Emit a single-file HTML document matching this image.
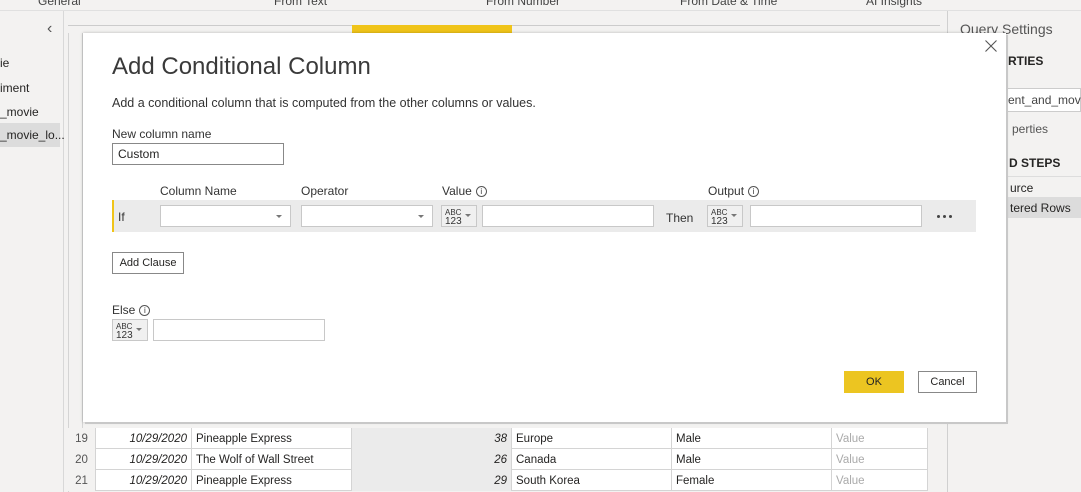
<!DOCTYPE html>
<html><head><meta charset="utf-8"><style>
*{box-sizing:border-box;margin:0;padding:0}
body{width:1081px;height:492px;overflow:hidden;background:#f3f2f1;font-family:"Liberation Sans",sans-serif;color:#252423;position:relative;font-size:12px}
.a{position:absolute}
.rib{top:-6px;font-size:12px;color:#444}
.gridrow{position:absolute;left:68px;width:860px;height:21px;border-bottom:1px solid #d4d4d4;background:#fff}
.c{position:absolute;top:0;height:21px;border-right:1px solid #d4d4d4;line-height:22px;font-size:11.5px;padding:0 4px;white-space:nowrap}
.dlg{left:83px;top:33px;width:923px;height:389px;background:#fff;box-shadow:2px 2px 0 #c8c8c8,0 0 3px rgba(0,0,0,.25)}
.inp{position:absolute;background:#fff;border:1px solid #c8c8c8;height:22px}
.dd::after{content:"";position:absolute;right:8px;top:9px;border:3px solid transparent;border-top:3px solid #777}
.t{position:absolute;font-size:12px;color:#333}
.type{position:absolute;width:36px;height:22px;border:1px solid #c8c8c8;background:#f0f0f0;font-size:8px;line-height:8px;padding:3px 0 0 3px;color:#333}
.type b{font-weight:normal;font-size:10px;line-height:9px;display:block}
.type::after{content:"";position:absolute;right:5px;top:8px;border:3px solid transparent;border-top:3px solid #777}
.info{display:inline-block;width:11px;height:11px;border:1px solid #555;border-radius:50%;font-size:8px;line-height:9px;text-align:center;vertical-align:middle;margin-left:4px}
.dot{position:absolute;width:3px;height:3px;border-radius:50%;background:#444;top:16px}
</style></head><body>
<div class="a rib" style="left:38px">General</div>
<div class="a rib" style="left:274px">From Text</div>
<div class="a rib" style="left:486px">From Number</div>
<div class="a rib" style="left:680px">From Date &amp; Time</div>
<div class="a rib" style="left:866px">AI Insights</div>
<div class="a" style="left:0;top:10px;width:1081px;height:1px;background:#e0e0e0"></div>
<div class="a" style="left:63px;top:11px;width:1px;height:481px;background:#d8d8d8"></div>
<div class="a" style="left:47px;top:20px;font-size:16px;color:#555">&#8249;</div>
<div class="a" style="left:0;top:56px;font-size:12px">ie</div>
<div class="a" style="left:0;top:81px;font-size:12px">iment</div>
<div class="a" style="left:0;top:105px;font-size:12px">_movie</div>
<div class="a" style="left:0;top:123px;width:60px;height:24px;background:#dcdcdc"></div>
<div class="a" style="left:0;top:128px;font-size:12px">_movie_lo...</div>
<!-- grid header -->
<div class="a" style="left:68px;top:25px;width:872px;height:1px;background:#ccc"></div>
<div class="a" style="left:352px;top:25px;width:160px;height:8px;background:#f0c419"></div>
<div class="a" style="left:68px;top:33px;width:15px;height:396px;background:#f3f2f1;border-right:1px solid #d4d4d4"></div>
<div class="a" style="left:68px;top:33px;width:1px;height:459px;background:#d4d4d4"></div>
<!-- rows -->
<div class="gridrow" style="top:428px"><div class="c" style="left:0;width:28px;text-align:center;color:#555;background:#f3f2f1">19</div><div class="c" style="left:28px;width:96px;text-align:right;font-style:italic">10/29/2020</div><div class="c" style="left:124px;width:160px">Pineapple Express</div><div class="c" style="left:284px;width:160px;text-align:right;font-style:italic;background:#ebebeb">38</div><div class="c" style="left:444px;width:160px">Europe</div><div class="c" style="left:604px;width:160px">Male</div><div class="c" style="left:764px;width:96px;color:#aaa">Value</div></div>
<div class="gridrow" style="top:449px"><div class="c" style="left:0;width:28px;text-align:center;color:#555;background:#f3f2f1">20</div><div class="c" style="left:28px;width:96px;text-align:right;font-style:italic">10/29/2020</div><div class="c" style="left:124px;width:160px">The Wolf of Wall Street</div><div class="c" style="left:284px;width:160px;text-align:right;font-style:italic;background:#ebebeb">26</div><div class="c" style="left:444px;width:160px">Canada</div><div class="c" style="left:604px;width:160px">Male</div><div class="c" style="left:764px;width:96px;color:#aaa">Value</div></div>
<div class="gridrow" style="top:470px"><div class="c" style="left:0;width:28px;text-align:center;color:#555;background:#f3f2f1">21</div><div class="c" style="left:28px;width:96px;text-align:right;font-style:italic">10/29/2020</div><div class="c" style="left:124px;width:160px">Pineapple Express</div><div class="c" style="left:284px;width:160px;text-align:right;font-style:italic;background:#ebebeb">29</div><div class="c" style="left:444px;width:160px">South Korea</div><div class="c" style="left:604px;width:160px">Female</div><div class="c" style="left:764px;width:96px;color:#aaa">Value</div></div>
<!-- right pane -->
<div class="a" style="left:947px;top:11px;width:1px;height:481px;background:#d0d0d0"></div>
<div class="a" style="left:960px;top:21px;font-size:14px;color:#555">Query Settings</div>
<div class="a" style="left:1008px;top:54px;font-size:12px;font-weight:bold">RTIES</div>
<div class="a" style="left:990px;top:88px;width:91px;height:24px;background:#fff;border:1px solid #ccc;font-size:12px;padding:4px 0 0 17px;color:#444">ent_and_movie</div>
<div class="a" style="left:1012px;top:122px;font-size:12px;color:#555">perties</div>
<div class="a" style="left:1009px;top:156px;font-size:12px;font-weight:bold">D STEPS</div>
<div class="a" style="left:990px;top:176px;width:91px;height:1px;background:#ddd"></div>
<div class="a" style="left:1010px;top:181px;font-size:12px">urce</div>
<div class="a" style="left:990px;top:197px;width:91px;height:21px;background:#dcdcdc"></div>
<div class="a" style="left:1010px;top:201px;font-size:12px">tered Rows</div>
<!-- dialog -->
<div class="a dlg">
 <svg class="a" style="left:902px;top:7px" width="12" height="12" viewBox="0 0 12 12"><path d="M0.5 0.5L11.5 11.5M11.5 0.5L0.5 11.5" stroke="#555" stroke-width="1.1" fill="none"/></svg>
 <div class="t" style="left:29px;top:20px;font-size:24px;font-weight:300;color:#3a3a3a">Add Conditional Column</div>
 <div class="t" style="left:29px;top:63px;font-size:12.5px">Add a conditional column that is computed from the other columns or values.</div>
 <div class="t" style="left:29px;top:94px">New column name</div>
 <div class="inp" style="left:29px;top:110px;width:172px;border-color:#888;font-size:12px;padding:3px 5px">Custom</div>
 <div class="t" style="left:77px;top:151px">Column Name</div>
 <div class="t" style="left:218px;top:151px">Operator</div>
 <div class="t" style="left:359px;top:151px">Value<span class="info">i</span></div>
 <div class="t" style="left:625px;top:151px">Output<span class="info">i</span></div>
 <div class="a" style="left:29px;top:167px;width:864px;height:32px;background:#ebebeb;border-left:2px solid #f0c419"></div>
 <div class="t" style="left:35px;top:177px">If</div>
 <div class="inp dd" style="left:77px;top:172px;width:131px"></div>
 <div class="inp dd" style="left:218px;top:172px;width:132px"></div>
 <div class="type" style="left:358px;top:172px">ABC<b>123</b></div>
 <div class="inp" style="left:399px;top:172px;width:172px"></div>
 <div class="t" style="left:583px;top:178px">Then</div>
 <div class="type" style="left:624px;top:172px">ABC<b>123</b></div>
 <div class="inp" style="left:667px;top:172px;width:172px"></div>
 <div class="dot" style="left:854px;top:182px"></div><div class="dot" style="left:860px;top:182px"></div><div class="dot" style="left:866px;top:182px"></div>
 <div class="a" style="left:29px;top:219px;width:72px;height:22px;border:1px solid #888;font-size:11px;text-align:center;line-height:20px">Add Clause</div>
 <div class="t" style="left:29px;top:270px">Else<span class="info">i</span></div>
 <div class="type" style="left:29px;top:286px">ABC<b>123</b></div>
 <div class="inp" style="left:70px;top:286px;width:172px"></div>
 <div class="a" style="left:761px;top:338px;width:60px;height:22px;background:#ecc521;font-size:11px;text-align:center;line-height:22px">OK</div>
 <div class="a" style="left:835px;top:338px;width:59px;height:22px;border:1px solid #888;font-size:11px;text-align:center;line-height:20px">Cancel</div>
</div>
</body></html>
